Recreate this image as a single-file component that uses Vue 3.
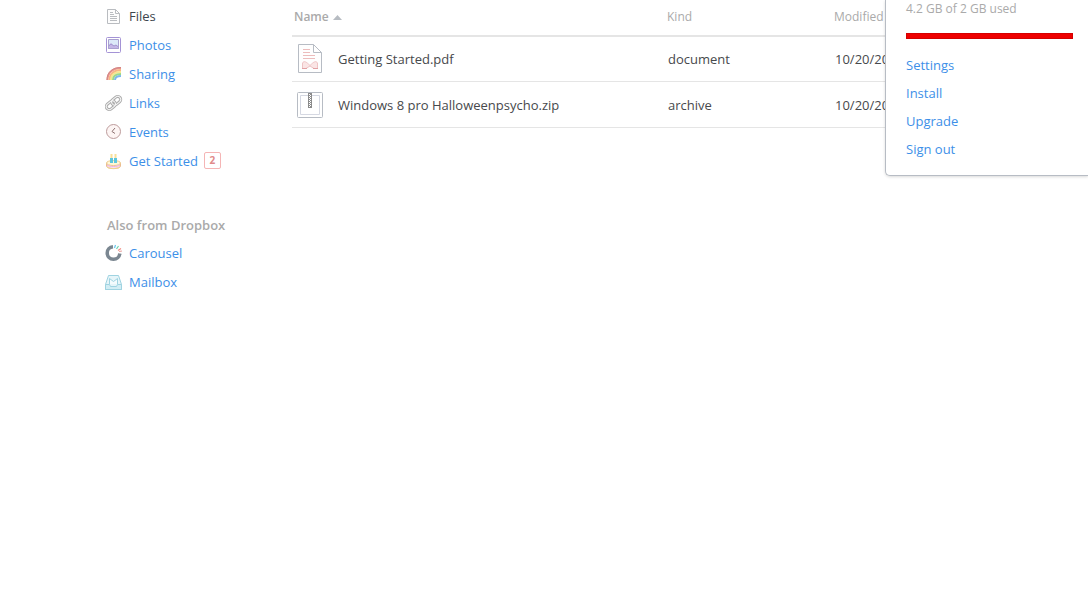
<script setup>
const files = [
  { name: 'Getting Started.pdf', kind: 'document', modified: '10/20/2014', icon: 'pdf' },
  { name: 'Windows 8 pro Halloweenpsycho.zip', kind: 'archive', modified: '10/20/2014', icon: 'zip' },
]
const account = ['Settings', 'Install', 'Upgrade', 'Sign out']
</script>

<template>
  <div class="page">
    <nav class="sidebar">
      <ul>
        <li>
          <a href="#" class="current">
            <svg width="18" height="18" viewBox="0 0 18 18" fill="none" stroke="#b9bcc0">
              <path d="M2.500 2.500H10.500L14.500 6.500V16.500H2.500Z" fill="#fdfdfd" />
              <path d="M10.500 2.500V6.500H14.500M5 5.500H8M5 7.500H9M5 9.500H12M5 11.500H12M5 13.500H12" />
            </svg>
            Files
          </a>
        </li>
        <li>
          <a href="#">
            <svg width="18" height="18" viewBox="0 0 18 18" fill="none">
              <rect x="1.500" y="1.500" width="14" height="15" rx="1" fill="#fff" stroke="#a493d6" />
              <path d="M3.500 3.500H13.500V12.500H3.500Z" fill="#dce9f8" />
              <path d="M3 10L6 7L9 10L11 9L14 11V13H3Z" fill="#c4b6e6" />
              <path d="M3.500 10L6 8L9 10L11 9L13.500 11" stroke="#a294cf" />
              <path d="M3.500 3.500H13.500V12.500H3.500Z" stroke="#a9a0cf" />
            </svg>
            Photos
          </a>
        </li>
        <li>
          <a href="#">
            <svg width="18" height="18" viewBox="0 0 18 18" fill="none" stroke-width="2">
              <path d="M2.500 15C2.500 7.500 8 3 16 3" stroke="#e9938f" />
              <path d="M4.500 15C4.500 9 9 5 16 5" stroke="#f7b583" />
              <path d="M6 15C6 10 10 7 16 7" stroke="#f6e68e" />
              <path d="M8 15C8 11 11 9 16 9" stroke="#9bd888" />
              <path d="M10 15C10 12 12.500 11 16 11" stroke="#7fb8ea" />
              <path d="M2 15C2 7 7.500 2.500 16 2.500" stroke="#d08683" stroke-width="1" />
            </svg>
            Sharing
          </a>
        </li>
        <li>
          <a href="#">
            <svg width="18" height="18" viewBox="0 0 18 18" fill="none">
              <g transform="rotate(-40 8.500 9)" stroke="#acacac" stroke-width="3">
                <rect x="0" y="6" width="10" height="6" rx="3" />
                <rect x="7" y="6" width="10" height="6" rx="3" />
              </g>
              <g transform="rotate(-40 8.500 9)" stroke="#f7f7f7">
                <rect x="0" y="6" width="10" height="6" rx="3" />
                <rect x="7" y="6" width="10" height="6" rx="3" />
              </g>
            </svg>
            Links
          </a>
        </li>
        <li>
          <a href="#">
            <svg width="18" height="18" viewBox="0 0 18 18" fill="none">
              <circle cx="8.500" cy="8.500" r="7" fill="#fdf5f4" stroke="#bd9c9c" />
              <path d="M10 5L7 8.500L10 10.500" stroke="#8d7373" />
            </svg>
            Events
          </a>
        </li>
        <li>
          <a href="#">
            <svg width="18" height="18" viewBox="0 0 18 18" fill="none">
              <path d="M1.500 11V14C1.500 17.500 15.500 17.500 15.500 14V11" fill="#f9dff0" stroke="#ebbd91" />
              <ellipse cx="8.500" cy="11" rx="7" ry="2.500" fill="#fff8d6" stroke="#ecc98b" />
              <path d="M2 13C4 15 13 15 15 13" stroke="#eeb4dc" />
              <path d="M2 15C4 17 13 17 15 15" stroke="#f1d78c" />
              <path d="M6.500 6V11M10.500 6V11" stroke="#5cc6dc" stroke-width="3" />
              <path d="M6.500 2V6M10.500 2V6" stroke="#f9e09a" stroke-width="2" />
            </svg>
            Get Started
            <span class="badge">2</span>
          </a>
        </li>
      </ul>
      <h2>Also from Dropbox</h2>
      <ul>
        <li>
          <a href="#">
            <svg width="18" height="18" viewBox="0 0 18 18" fill="none">
              <path d="M8 2.700A6.300 6.300 0 1 0 14.800 9.500" stroke="#7b8791" stroke-width="3.500" />
              <path d="M10.500 1L9.500 4" stroke="#65c5ef" stroke-width="1.200" />
              <path d="M13.500 2L11.500 5" stroke="#6bd3b0" stroke-width="1.200" />
              <path d="M16 4.500L13 6.500" stroke="#f28a7f" stroke-width="1.200" />
              <path d="M17 7L14 7.500" stroke="#e8a09c" stroke-width="1.200" />
            </svg>
            Carousel
          </a>
        </li>
        <li>
          <a href="#">
            <svg width="18" height="18" viewBox="0 0 18 18" fill="none" stroke="#9fd3e1">
              <path d="M3.500 2.500H13.500L16.500 11.500V16.500H0.500V11.500Z" fill="#e6f5f9" />
              <path d="M0.500 11.500H4.500L5.500 13.500H11.500L12.500 11.500H16.500V16.500H0.500Z" fill="#d2edf4" />
              <path d="M4.500 11V5.500L8.500 8.500L12.500 5.500V11" fill="#f4fbfd" />
            </svg>
            Mailbox
          </a>
        </li>
      </ul>
    </nav>

    <main>
      <table>
        <thead>
          <tr>
            <th class="name sorted">
              Name
              <svg width="9" height="5" viewBox="0 0 9 5"><path d="M0 5L4.500 0L9 5Z" fill="#b7bcc2" /></svg>
            </th>
            <th class="kind">Kind</th>
            <th class="modified">Modified</th>
          </tr>
        </thead>
        <tbody>
          <tr v-for="file in files" :key="file.name">
            <td>
              <div class="file">
                <svg v-if="file.icon === 'pdf'" width="32" height="32" viewBox="0 1 32 32" fill="none">
                  <path d="M4.500 2.500H19.500L27.500 10.500V30.500H4.500Z" fill="#fefefe" stroke="#b7bcc4" />
                  <path d="M19.500 2.500V10.500H27.500" stroke="#b7bcc4" />
                  <path d="M9 7.500H16M9 10.500H16M9 13.500H21M9 16.500H21" stroke="#ecbcbc" />
                  <path d="M8.500 21C10 18.500 12 19.500 16 23.500C20 19.500 22 18.500 23.500 21V26.500H20L16 24L12 26.500H8.500Z" fill="#fae5e5" stroke="#eec3c4" />
                  <path d="M8 26.500H13M19 26.500H24" stroke="#e2a2a5" />
                </svg>
                <svg v-else width="32" height="32" viewBox="0 1 32 32" fill="none">
                  <rect x="3.500" y="4.500" width="25" height="25" rx="1" fill="#fff" stroke="#b7bcc4" />
                  <path d="M6.500 7.500H25.500V26.500H6.500Z" stroke="#d5d8e2" />
                  <path d="M14 5H18V20H14Z" fill="#8b8b8b" />
                  <path d="M15.500 6V19" stroke="#fff" stroke-dasharray="1 1" />
                  <path d="M16.500 7V19" stroke="#fff" stroke-dasharray="1 1" />
                </svg>
                <a href="#">{{ file.name }}</a>
              </div>
            </td>
            <td>{{ file.kind }}</td>
            <td>{{ file.modified }}</td>
          </tr>
        </tbody>
      </table>
    </main>

    <aside class="account">
      <p>4.2 GB of 2 GB used</p>
      <div class="quota"></div>
      <ul>
        <li v-for="item in account" :key="item"><a href="#">{{ item }}</a></li>
      </ul>
    </aside>
  </div>
</template>

<style>
body {
  background: #fff;
}
</style>

<style scoped>
.page {
  position: relative;
  display: flex;
  min-height: 100vh;
  overflow: hidden;
  font: 13px/18px "Open Sans", "Noto Sans", sans-serif;
  color: #47494c;
}
ul {
  list-style: none;
  margin: 0;
  padding: 0;
}
a {
  color: #3d8fe8;
  text-decoration: none;
}
.sidebar {
  flex: 0 0 187px;
  padding: 1px 0 0 105px;
}
.sidebar a {
  display: flex;
  align-items: center;
  gap: 6px;
  height: 29px;
}
.sidebar .current {
  font-weight: 500;
  color: #3d464d;
}
.badge {
  box-sizing: border-box;
  min-width: 17px;
  border: 1px solid #f5b5b5;
  border-radius: 2px;
  font-size: 10px;
  font-weight: 700;
  line-height: 15px;
  text-align: center;
  color: #e08a8a;
}
h2 {
  margin: 41px 0 4px 2px;
  font-size: 13px;
  line-height: 18px;
  font-weight: 600;
  color: #aaa;
}
main {
  flex: 1;
  padding-right: 105px;
}
table {
  width: 100%;
  table-layout: fixed;
  border-collapse: separate;
  border-spacing: 0;
}
th {
  box-sizing: border-box;
  height: 37px;
  padding: 0 2px 2px;
  border-bottom: 2px solid #e5e5e5;
  font-size: 12px;
  font-weight: 400;
  text-align: left;
  color: #aaa;
}
.sorted {
  font-weight: 600;
}
.sorted svg {
  margin: 0 0 1px 1px;
}
.name {
  width: 373px;
}
.kind {
  width: 167px;
}
td {
  box-sizing: border-box;
  height: 46px;
  padding: 0 3px;
  border-bottom: 1px solid #e5e5e5;
}
td:first-child {
  padding-left: 2px;
}
tbody tr:first-child td {
  height: 45px;
}
.file {
  display: flex;
  align-items: center;
  gap: 12px;
}
.file a {
  color: inherit;
}
.account {
  position: absolute;
  top: 0;
  right: 0;
  box-sizing: border-box;
  width: 203px;
  padding: 0 15px 12px 20px;
  border: 1px solid #b7bcc4;
  border-width: 0 0 1px 1px;
  border-radius: 0 0 0 5px;
  background: #fff;
  box-shadow: 0 1px 3px rgba(0, 0, 0, 0.15);
}
.account p {
  margin: 0 0 15px;
  font-size: 12px;
  color: #aaa;
}
.quota {
  box-sizing: border-box;
  height: 6px;
  margin-bottom: 12px;
  border: 1px solid #d40000;
  background: #ee0000;
}
.account li {
  line-height: 28px;
}
</style>
